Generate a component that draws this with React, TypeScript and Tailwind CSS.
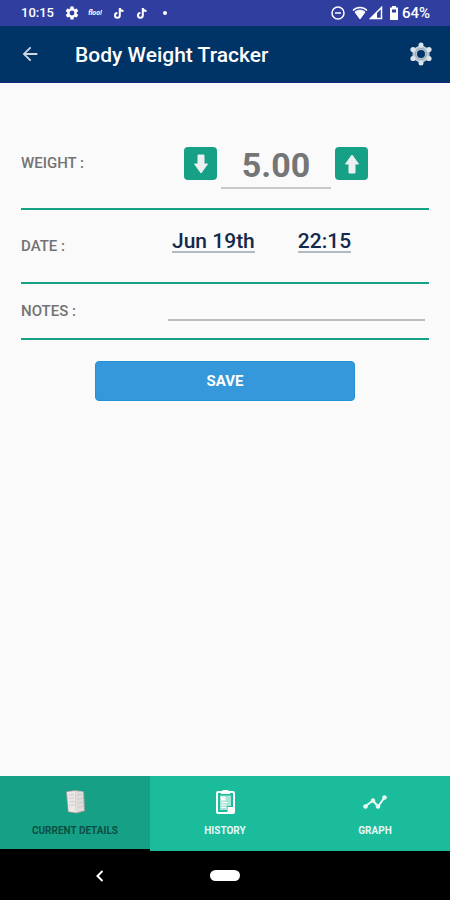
import { useState } from 'react';
import type { ReactNode } from 'react';
import { MdArrowBack, MdSettings } from 'react-icons/md';

const tabs = [
  { id: 'details', label: 'CURRENT DETAILS', icon: <PaperIcon /> },
  { id: 'history', label: 'HISTORY', icon: <ClipboardIcon /> },
  { id: 'graph', label: 'GRAPH', icon: <GraphIcon /> },
];

function PaperIcon() {
  return (
    <svg width="24" height="26" viewBox="0 0 24 26" aria-hidden="true">
      <path d="M3 2.500 12 1l9 1.500L22 22l-8 2.500L5 23z" fill="#a9a19e" />
      <path d="M4 3 12 2l1 21.500L5.500 22.500z" fill="#ebe8e7" />
      <path d="m12 2 8 .8L21 21.500l-8 2z" fill="#dfdcdb" />
      <path d="m6 6 5-.5M6 9.500l5-.5M6.500 13l5-.5M6.500 16.500l5-.5M14 6l5-.3M14.500 10l5-.4M14.500 14l5-.4M14.500 18l5-.5" stroke="#cfcbca" />
    </svg>
  );
}

function ClipboardIcon() {
  return (
    <svg width="24" height="26" viewBox="0 0 24 26" fill="none" aria-hidden="true">
      <rect x="4" y="3" width="17" height="21" rx="1" stroke="#fff" strokeWidth="2" />
      <path d="M8 3.500 10 1h5l2 2.500V5H8z" fill="#fff" />
      <path d="M7 6.500h11V17h-4v4H7z" fill="#a9e4d6" />
      <path d="M8 7.500h4.500v4H8z" fill="#fff" />
      <path d="M8.500 13.500h6M8.500 16H13M8.500 18.500H13" stroke="#fff" strokeWidth="1.200" />
      <path d="M14.500 23v-5H20v5z" fill="#fff" />
    </svg>
  );
}

function GraphIcon() {
  return (
    <svg width="26" height="26" viewBox="0 0 26 26" fill="#e8f8f5" aria-hidden="true">
      <path d="m3 17.500 8-6 5 6 6.500-9" fill="none" stroke="#e8f8f5" strokeWidth="2" />
      <circle cx="3.500" cy="17.500" r="2.300" />
      <circle cx="11" cy="11.500" r="2.200" />
      <circle cx="16" cy="17.500" r="2.300" />
      <circle cx="22.500" cy="8.500" r="2.300" />
    </svg>
  );
}

function NoteIcon() {
  return (
    <svg width="10" height="12" viewBox="0 0 10 12" fill="none" aria-hidden="true">
      <path d="M5.800 1v7.500A2.400 2.400 0 1 1 3.400 6M5.800 1.500C6.300 3.300 7.500 4 9.500 4" stroke="#fff" strokeWidth="2" />
    </svg>
  );
}

function StatusBar() {
  return (
    <div className="flex h-[26px] items-center bg-[#303f9f] pr-5 pl-[21px] text-sm font-medium text-white">
      <span className="text-[13px]">10:15</span>
      <MdSettings className="ml-[10px] size-4" />
      <span className="ml-[7px] w-4 text-center text-[7px] font-bold italic">floo!</span>
      <span className="ml-[11px] flex gap-[13px]">
        <NoteIcon />
        <NoteIcon />
      </span>
      <span className="ml-4 size-1 rounded-full bg-white" />
      <div className="ml-auto flex items-center">
        <svg width="14" height="14" viewBox="0 0 14 14" fill="none" stroke="#fff" strokeWidth="1.500" aria-hidden="true">
          <circle cx="7" cy="7" r="6" />
          <path d="M4 7h6" />
        </svg>
        <svg className="ml-[7px]" width="16" height="14" viewBox="0 0 16 14" aria-hidden="true">
          <path d="M1 4.500C5 .5 11 .5 15 4.500" fill="none" stroke="#fff" strokeWidth="1.500" />
          <path d="M3 6c3-2.500 7-2.500 10 0l-5 7z" fill="#fff" stroke="#fff" />
        </svg>
        <svg className="ml-[1px]" width="14" height="14" viewBox="0 0 14 14" aria-hidden="true">
          <path d="M12.500 1.500v11h-11z" fill="none" stroke="#fff" strokeWidth="1.500" />
          <path d="M1 13 8 6v7z" fill="#fff" />
        </svg>
        <svg className="ml-[6px]" width="10" height="14" viewBox="0 0 10 14" aria-hidden="true">
          <path d="M3 0h4v1.500h2V14H1V1.500h2z" fill="#fff" />
          <path d="M3 3.500h4v3H3z" fill="#303f9f" />
        </svg>
        <span className="ml-[3px] pt-px text-[15px]">64%</span>
      </div>
    </div>
  );
}

function Header() {
  return (
    <header className="flex h-[57px] items-center border-b border-[#1a237e] bg-[#003366] pr-[18px] pl-[19px] text-white">
      <button type="button" aria-label="Back" className="text-[#ccd6e4]">
        <MdArrowBack className="size-[22px]" />
      </button>
      <h1 className="ml-[34px] pt-1 text-[21px] font-medium">Body Weight Tracker</h1>
      <button type="button" aria-label="Settings" className="ml-auto">
        <svg width="22" height="24" viewBox="0 0 22 24" aria-hidden="true">
          <path
            d="M11 3 19 7.500v9L11 21l-8-4.500v-9z"
            fill="#bccad6"
            stroke="#bccad6"
            strokeLinejoin="round"
          />
          <g fill="#dbe4ea">
            <circle cx="11" cy="3" r="2.500" />
            <circle cx="11" cy="21" r="2.500" />
            <circle cx="3" cy="7.500" r="2.600" />
            <circle cx="19" cy="7.500" r="2.600" />
            <circle cx="3" cy="16.500" r="2.600" />
            <circle cx="19" cy="16.500" r="2.600" />
          </g>
          <circle cx="11" cy="12" r="5.500" fill="none" stroke="#90a5b9" />
          <circle cx="11" cy="12" r="4" fill="#003366" />
        </svg>
      </button>
    </header>
  );
}

function StepButton({ label, up, onClick }: { label: string; up?: boolean; onClick: () => void }) {
  return (
    <button
      type="button"
      aria-label={label}
      onClick={onClick}
      className="flex size-[33px] items-center justify-center rounded bg-[#16a085]"
    >
      <svg width="16" height="20" viewBox="0 0 16 20" className={up ? 'rotate-180' : ''} aria-hidden="true">
        <path d="M5 1h6v9h3.500L8 19 1.500 10H5z" fill="#ecf0f1" stroke="#ecf0f1" strokeLinejoin="round" />
      </svg>
    </button>
  );
}

function Row({ label, htmlFor, className, children }: { label: string; htmlFor: string; className: string; children: ReactNode }) {
  return (
    <div className={`flex items-center border-b-2 border-[#16a085] ${className}`}>
      <label htmlFor={htmlFor} className="w-[147px] shrink-0 text-[15px] font-medium text-[#737373]">
        {label}
      </label>
      {children}
    </div>
  );
}

export default function App() {
  const [weight, setWeight] = useState('5.00');
  const [notes, setNotes] = useState('');
  const [active, setActive] = useState('details');

  const step = (n: number) => setWeight((Number(weight) + n).toFixed(2));

  return (
    <div className="flex min-h-screen flex-col bg-[#fafafa] font-[Roboto,sans-serif]">
      <StatusBar />
      <Header />

      <main className="flex-1 px-[21px]">
        <Row label="WEIGHT :" htmlFor="weight" className="h-[127px] pt-9">
          <div className="ml-4 flex items-center gap-1">
            <StepButton label="Decrease weight" onClick={() => step(-0.1)} />
            <input
              id="weight"
              value={weight}
              onChange={(e) => setWeight(e.target.value)}
              className="mt-2 h-[42px] w-[110px] border-b-2 border-[#c8c8c8] bg-transparent pb-0.5 text-center text-[34px] font-bold text-[#757575] outline-none"
            />
            <StepButton label="Increase weight" up onClick={() => step(0.1)} />
          </div>
        </Row>

        <Row label="DATE :" htmlFor="date" className="h-[74px]">
          <div className="mb-2 ml-1 flex gap-[43px] text-[21px] font-medium text-[#14294b]">
            <button id="date" type="button" className="h-[22px] border-b-2 border-[#b5b9c0] leading-5">
              Jun 19th
            </button>
            <button type="button" aria-label="Time" className="h-[22px] border-b-2 border-[#b5b9c0] leading-5">
              22:15
            </button>
          </div>
        </Row>

        <Row label="NOTES :" htmlFor="notes" className="h-14">
          <input
            id="notes"
            value={notes}
            onChange={(e) => setNotes(e.target.value)}
            className="mr-1 mb-2 h-7 min-w-0 flex-1 border-b-2 border-[#bdbdbd] bg-transparent text-base text-[#737373] outline-none"
          />
        </Row>

        <button
          type="button"
          className="mx-auto mt-[21px] block h-10 w-[260px] rounded border border-[#2490d5] bg-[#3498db] text-[15px] font-bold text-white"
        >
          SAVE
        </button>
      </main>

      <nav className="grid h-[75px] grid-cols-3 bg-[#1abc9c]">
        {tabs.map((tab) => (
          <button
            key={tab.id}
            type="button"
            onClick={() => setActive(tab.id)}
            className={`flex flex-col items-center gap-2 pt-[13px] text-[10px] leading-4 font-bold ${
              active === tab.id ? 'border-b-2 border-black bg-[#16a085] text-[#0b4f44]' : 'text-[#e8f8f5]'
            }`}
          >
            {tab.icon}
            {tab.label}
          </button>
        ))}
      </nav>

      <div className="grid h-[49px] grid-cols-3 items-center bg-black">
        <button type="button" aria-label="System back" className="mr-[46px] justify-self-end">
          <svg width="8" height="12" viewBox="0 0 8 12" fill="none" aria-hidden="true">
            <path d="M6.500 1 1.500 6l5 5" stroke="#fff" strokeWidth="2" />
          </svg>
        </button>
        <button type="button" aria-label="Home" className="h-[11px] w-[30px] justify-self-center rounded-full bg-white" />
      </div>
    </div>
  );
}
